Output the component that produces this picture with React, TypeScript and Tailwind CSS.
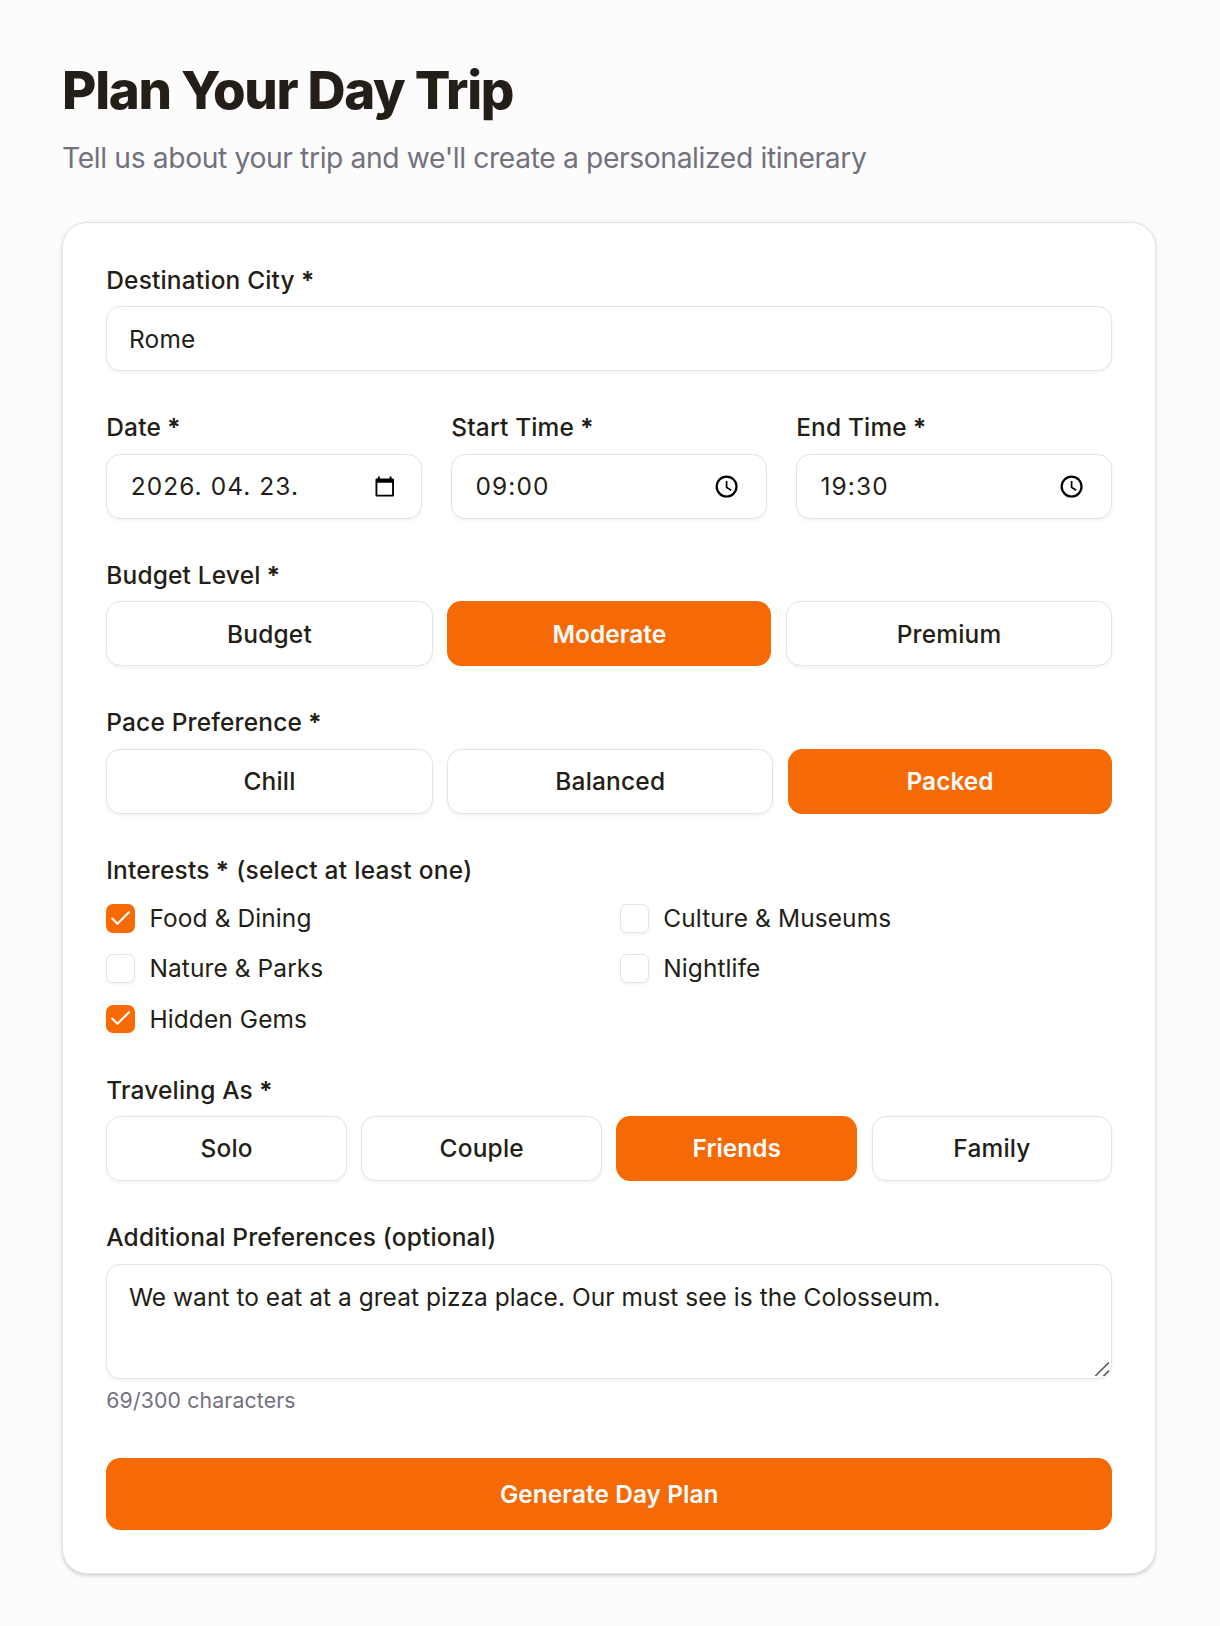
import React, { useState } from 'react';
import { Check } from 'lucide-react';

type FieldProps = {
  label: string;
  required?: boolean;
  hint?: string;
  children: React.ReactNode;
};

type OptionButtonProps = {
  label: string;
  selected: boolean;
  onClick: () => void;
};

const budgets = ['Budget', 'Moderate', 'Premium'];
const paces = ['Chill', 'Balanced', 'Packed'];
const groups = ['Solo', 'Couple', 'Friends', 'Family'];
const interestOptions = ['Food & Dining', 'Culture & Museums', 'Nature & Parks', 'Nightlife', 'Hidden Gems'];

const MAX_LENGTH = 300;

const CalendarIcon = () => (
  <svg viewBox="0 0 20 22" className="h-[11.9px] w-[10.8px]" fill="black">
    <path d="M3 0.5h2V3H3zM15 0.5h2V3h-2z" />
    <path d="M1.5 2.5h17a1 1 0 0 1 1 1v16.6a1 1 0 0 1-1 1h-17a1 1 0 0 1-1-1V3.5a1 1 0 0 1 1-1zM2.4 7v12.2h15.2V7z" fillRule="evenodd" />
  </svg>
);

const ClockIcon = () => (
  <svg viewBox="0 0 16 16" className="size-[14px]" fill="none" stroke="black">
    <circle cx="8" cy="8" r="6.3" strokeWidth="1.4" />
    <path d="M8 4.4v4.1l2.9 1.8" strokeWidth="1.1" />
  </svg>
);

const Field: React.FC<FieldProps> = ({ label, required, hint, children }) => (
  <div className="flex flex-col gap-[7px]">
    <div className="text-[13.6px] leading-[15px] font-medium tracking-[0.007em]">
      {label}
      {required && <span className="font-bold"> *</span>}
      {hint && <span className="tracking-[0.012em]"> {hint}</span>}
    </div>
    {children}
  </div>
);

const OptionButton: React.FC<OptionButtonProps> = ({ label, selected, onClick }) => (
  <button
    type="button"
    onClick={onClick}
    className={
      selected
        ? 'h-9 flex-1 rounded-[8px] bg-[#f66a05] px-4 pt-[0.4px] text-[13.6px] font-semibold tracking-[0.001em] text-[#fcfcfc]'
        : 'h-9 flex-1 rounded-[8px] border border-[#e4e4e7] bg-white px-4 pt-[0.4px] text-[13.6px] font-medium tracking-[0.008em] shadow-xs'
    }
  >
    {label}
  </button>
);

const PickerInput = ({ value, icon }: { value: string; icon: React.ReactNode }) => (
  <div className="flex h-9 items-center justify-between rounded-[8px] border border-[#e4e4e7] bg-white pr-[15.2px] pl-[13px] shadow-xs">
    <span className="text-[13.6px] tracking-[0.044em]">{value}</span>
    {icon}
  </div>
);

export default function App() {
  const [budget, setBudget] = useState('Moderate');
  const [pace, setPace] = useState('Packed');
  const [group, setGroup] = useState('Friends');
  const [interests, setInterests] = useState(['Food & Dining', 'Hidden Gems']);
  const [notes, setNotes] = useState('We want to eat at a great pizza place. Our must see is the Colosseum.');

  const toggleInterest = (name: string) => {
    setInterests(prev => (prev.includes(name) ? prev.filter(i => i !== name) : [...prev, name]));
  };

  return (
    <div className="min-h-[1626px] bg-[#fcfcfc]">
      <main className="[zoom:1.8] pt-8 pl-[34.5px] font-['Inter',sans-serif] text-[#231e17]">
        <div className="w-[608px]">
          <h1 className="mb-2 text-[29.3px] leading-[36px] font-extrabold tracking-[-0.0245em]">Plan Your Day Trip</h1>
          <p className="mb-[23.6px] text-[15.7px] leading-[24px] tracking-[-0.0135em] text-[#73717c]">
            Tell us about your trip and we'll create a personalized itinerary
          </p>

          <form className="flex flex-col gap-6 rounded-[14px] border border-[#e4e4e7] bg-white p-6 shadow-sm">
            <Field label="Destination City" required>
              <input
                defaultValue="Rome"
                className="h-9 w-full rounded-[8px] border border-[#e4e4e7] bg-white px-3 text-[13.6px] tracking-[0.01em] shadow-xs outline-none"
              />
            </Field>

            <div className="grid grid-cols-3 gap-4">
              <Field label="Date" required>
                <PickerInput value="2026. 04. 23." icon={<CalendarIcon />} />
              </Field>
              <Field label="Start Time" required>
                <PickerInput value="09:00" icon={<ClockIcon />} />
              </Field>
              <Field label="End Time" required>
                <PickerInput value="19:30" icon={<ClockIcon />} />
              </Field>
            </div>

            <Field label="Budget Level" required>
              <div className="flex gap-2">
                {budgets.map(b => (
                  <OptionButton key={b} label={b} selected={b === budget} onClick={() => setBudget(b)} />
                ))}
              </div>
            </Field>

            <Field label="Pace Preference" required>
              <div className="flex gap-2">
                {paces.map(p => (
                  <OptionButton key={p} label={p} selected={p === pace} onClick={() => setPace(p)} />
                ))}
              </div>
            </Field>

            <Field label="Interests" required hint="(select at least one)">
              <div className="grid grid-cols-2 gap-3 pt-1">
                {interestOptions.map(name => {
                  const checked = interests.includes(name);
                  return (
                    <div key={name} className="flex h-4 items-center gap-2">
                      <button
                        type="button"
                        onClick={() => toggleInterest(name)}
                        className={
                          checked
                            ? 'flex size-4 items-center justify-center rounded-[4px] bg-[#f66a05] text-white shadow-xs'
                            : 'size-4 rounded-[4px] border border-[#e4e4e7] bg-white shadow-xs'
                        }
                      >
                        {checked && <Check className="size-[14px]" />}
                      </button>
                      <span className="pt-[0.6px] text-[13.6px] leading-[14px] tracking-[0.004em]">{name}</span>
                    </div>
                  );
                })}
              </div>
            </Field>

            <Field label="Traveling As" required>
              <div className="grid grid-cols-4 gap-2">
                {groups.map(g => (
                  <OptionButton key={g} label={g} selected={g === group} onClick={() => setGroup(g)} />
                ))}
              </div>
            </Field>

            <Field label="Additional Preferences (optional)">
              <div>
                <div className="relative">
                  <textarea
                    value={notes}
                    maxLength={MAX_LENGTH}
                    onChange={e => setNotes(e.target.value)}
                    className="block h-16 w-full resize-none rounded-[8px] border border-[#e4e4e7] bg-white px-3 py-2 text-[13.6px] leading-[20px] tracking-[0.002em] shadow-xs outline-none"
                  />
                  {/* resize grip */}
                  <svg viewBox="0 0 14 14" className="pointer-events-none absolute right-[1.8px] bottom-[1.5px] size-[8px]" stroke="#5c5c5c" strokeWidth="1.5">
                    <path d="M0 14L14 0M8 14l6-6" />
                  </svg>
                </div>
                <p className="mt-1 text-[11.8px] leading-[16px] tracking-[0.007em] text-[#73717c]">
                  {notes.length}/{MAX_LENGTH} characters
                </p>
              </div>
            </Field>

            <button
              type="submit"
              className="h-10 w-full rounded-[8px] bg-[#f66a05] text-[13.6px] font-semibold tracking-[0.002em] text-[#fcfcfc]"
            >
              Generate Day Plan
            </button>
          </form>
        </div>
      </main>
    </div>
  );
}
